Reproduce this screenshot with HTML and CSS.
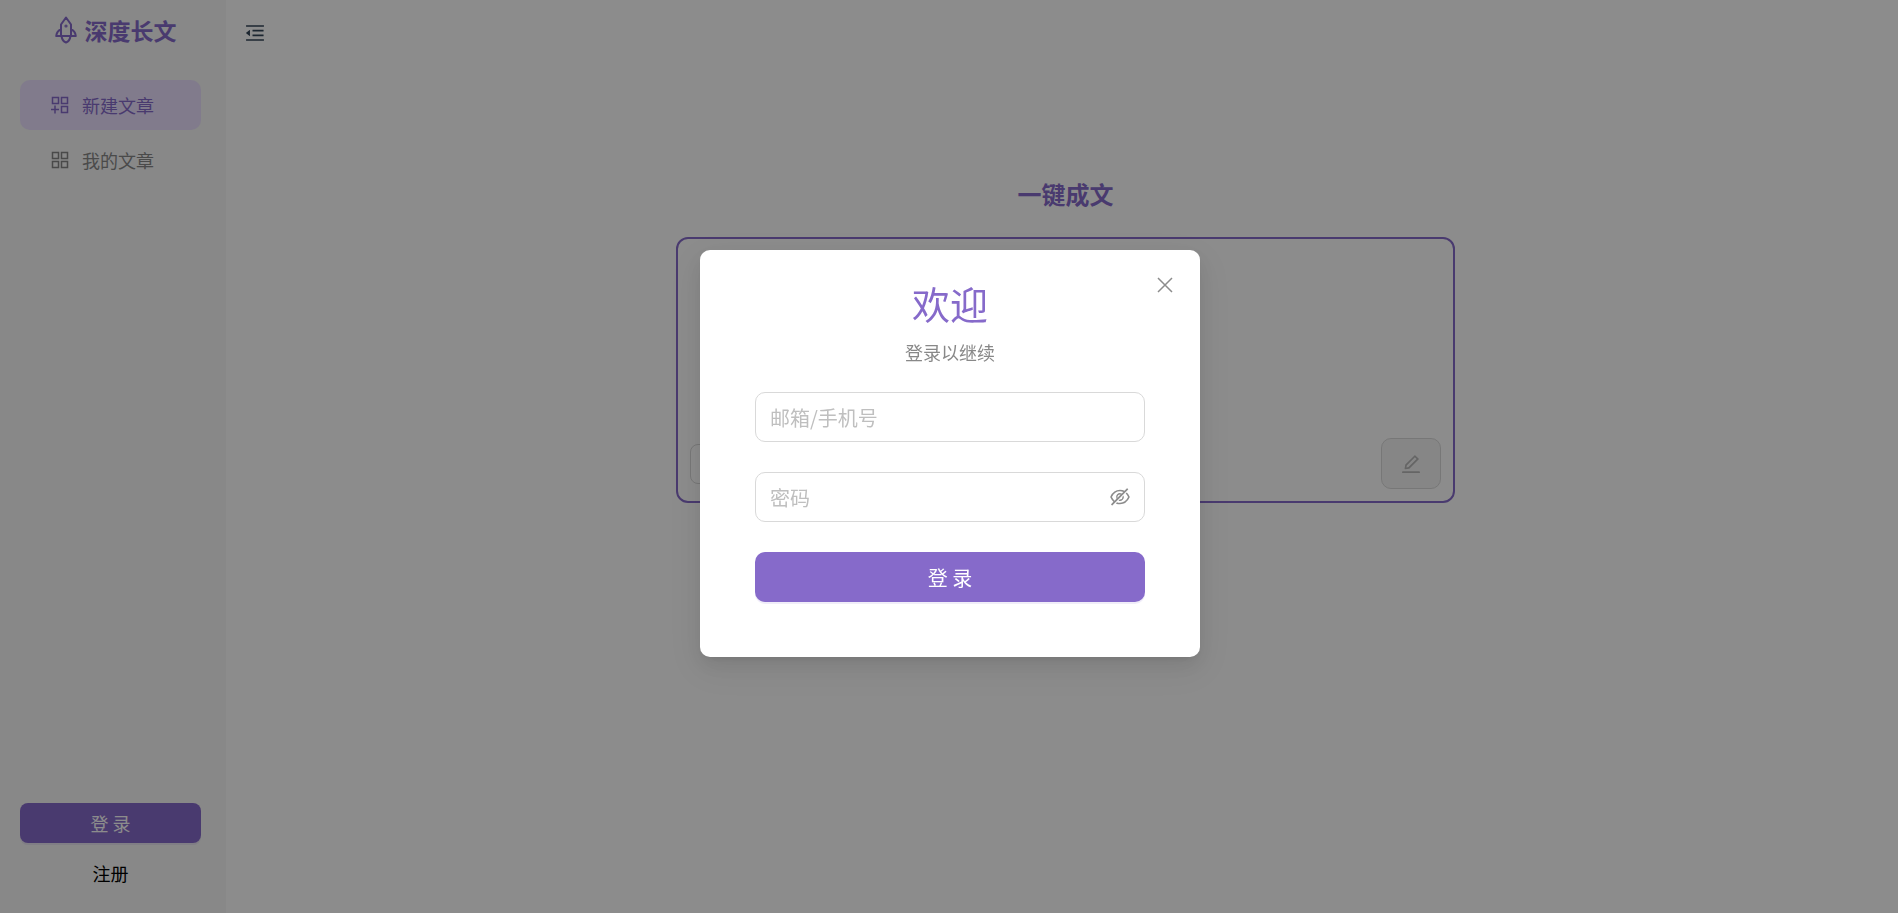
FILE: index.html
```
<!DOCTYPE html>
<html lang="zh-CN">
<head>
<meta charset="utf-8" />
<title>深度长文</title>
<link rel="stylesheet" href="styles.css">
</head>
<body>
	<div class="layout">
		<aside class="sider">
			<div class="logo">
				<svg class="logo-icon" viewBox="0 0 22 28" aria-hidden="true">
					<path d="M6 19.500V8.500L11 1.500l5 7v11M6 13.500c-3 1-4.500 3.500-4.800 6.500h19.600c-.3-3-1.800-5.500-4.800-6.500M6.500 20c.5 3.500 2 5.700 4.500 6.500 2.500-.8 4-3 4.500-6.500" />
					<circle cx="11" cy="10" r=".6" />
				</svg>
				<span>深度长文</span>
			</div>
			<nav class="menu">
				<a class="menu-item active" href="#">
					<svg class="menu-icon" viewBox="0 0 18 18" aria-hidden="true">
						<path d="M1.500 1.500h6v6h-6zM10.500 1.500h6v6h-6zM10.500 10.500h6v6h-6zM4 9.500v8M0 13.500h8" />
					</svg>
					<span>新建文章</span>
				</a>
				<a class="menu-item" href="#">
					<svg class="menu-icon" viewBox="0 0 18 18" aria-hidden="true">
						<path d="M1.500 1.500h6v6h-6zM10.500 1.500h6v6h-6zM10.500 10.500h6v6h-6zM1.500 10.500h6v6h-6z" />
					</svg>
					<span>我的文章</span>
				</a>
			</nav>
			<div class="sider-footer">
				<button type="button" class="btn btn-primary">登 录</button>
				<button type="button" class="btn btn-text">注册</button>
			</div>
		</aside>
		<main class="main">
			<header class="header">
				<button type="button" class="fold" aria-label="收起菜单">
					<svg viewBox="64 64 896 896" aria-hidden="true">
						<path d="M408 442h480c4.400 0 8-3.600 8-8v-56c0-4.400-3.600-8-8-8H408c-4.400 0-8 3.600-8 8v56c0 4.400 3.600 8 8 8zm-8 204c0 4.400 3.600 8 8 8h480c4.400 0 8-3.600 8-8v-56c0-4.400-3.600-8-8-8H408c-4.400 0-8 3.600-8 8v56zm504-486H120c-4.400 0-8 3.600-8 8v56c0 4.400 3.600 8 8 8h784c4.400 0 8-3.600 8-8v-56c0-4.400-3.600-8-8-8zm0 632H120c-4.400 0-8 3.600-8 8v56c0 4.400 3.600 8 8 8h784c4.400 0 8-3.600 8-8v-56c0-4.400-3.600-8-8-8zM115.400 518.900L271.700 642c5.800 4.600 14.400.5 14.400-6.900V388.900c0-7.400-8.500-11.500-14.400-6.900L115.400 505.100a8.740 8.740 0 000 13.800z" />
					</svg>
				</button>
			</header>
			<section class="content">
				<h1 class="content-title">一键成文</h1>
				<div class="editor">
					<textarea class="editor-text" aria-label="文章主题"></textarea>
					<div class="editor-tools">
						<select class="editor-select" aria-label="文章类型"></select>
						<button type="button" class="editor-submit" aria-label="生成" disabled>
							<svg viewBox="64 64 896 896" aria-hidden="true">
								<path d="M257.700 752c2 0 4-.2 6-.5L431.900 722c2-.4 3.900-1.300 5.300-2.800l423.900-423.900a9.960 9.960 0 000-14.100L694.900 114.900c-1.900-1.900-4.400-2.900-7.100-2.900s-5.200 1-7.100 2.900L256.800 538.800c-1.500 1.500-2.400 3.300-2.800 5.300l-29.500 168.200a33.500 33.500 0 009.400 29.800c6.600 6.400 14.900 9.900 23.800 9.900zm67.400-174.400L687.800 215l73.300 73.300-362.700 362.600-88.900 15.700 15.600-89zM880 836H144c-17.700 0-32 14.300-32 32v36c0 4.400 3.600 8 8 8h784c4.400 0 8-3.600 8-8v-36c0-17.700-14.300-32-32-32z" />
							</svg>
						</button>
					</div>
				</div>
			</section>
		</main>
	</div>

	<div class="mask">
		<div class="modal" role="dialog" aria-modal="true" aria-labelledby="modal-title">
			<button type="button" class="modal-close" aria-label="关闭">
				<svg viewBox="0 0 16 16" aria-hidden="true">
					<path d="M1 1l14 14M15 1L1 15" />
				</svg>
			</button>
			<h2 class="modal-title" id="modal-title">欢迎</h2>
			<p class="modal-desc">登录以继续</p>
			<form class="login-form">
				<div class="field">
					<input type="text" aria-label="邮箱/手机号" placeholder="邮箱/手机号">
				</div>
				<div class="field">
					<input type="password" aria-label="密码" placeholder="密码">
					<button type="button" class="eye" aria-label="显示密码">
						<svg viewBox="64 64 896 896" aria-hidden="true">
							<path d="M942.200 486.200Q889.470 375.110 816.700 305l-50.880 50.880C807.310 395.530 843.450 447.400 874.700 512 791.500 684.200 673.400 766 512 766q-72.670 0-133.870-22.380L323 798.750Q408 838 512 838q288.300 0 430.200-300.300a60.290 60.290 0 000-51.500zm-63.570-320.640L836 122.880a8 8 0 00-11.320 0L715.310 232.200Q624.860 186 512 186q-288.300 0-430.200 300.300a60.300 60.300 0 000 51.500q56.690 119.400 136.500 191.410L112.480 835a8 8 0 000 11.310L155.170 889a8 8 0 0011.310 0l712.150-712.120a8 8 0 000-11.320zM149.300 512C232.600 339.800 350.700 258 512 258c54.540 0 104.130 9.360 149.120 28.390l-70.300 70.300a176 176 0 00-238.130 238.130l-83.420 83.420C223.100 637.490 183.300 582.280 149.300 512zm246.700 0a112.110 112.110 0 01146.200-106.690L401.310 546.200A112 112 0 01396 512z" />
							<path d="M508 624c-3.460 0-6.870-.16-10.250-.47l-52.820 52.820a176.090 176.090 0 00227.420-227.420l-52.820 52.820c.31 3.380.47 6.790.47 10.250a111.940 111.940 0 01-112 112z" />
						</svg>
					</button>
				</div>
				<button type="submit" class="btn btn-primary btn-large">登 录</button>
			</form>
		</div>
	</div>
</body>
</html>
```
FILE: styles.css
```
* {
	box-sizing: border-box;
}

body {
	margin: 0;
	font-family: "Noto Sans CJK SC", sans-serif;
	font-size: 18px;
	font-weight: 400;
	color: #000;
	background: #fff;
}

button, input, textarea, select {
	font: inherit;
	color: inherit;
}

button {
	padding: 0;
	border: none;
	background: none;
	cursor: pointer;
}

a {
	text-decoration: none;
}

svg {
	display: block;
	fill: currentColor;
}

.layout {
	display: flex;
	min-height: 100vh;
}

/* 侧边栏 */
.sider {
	display: flex;
	flex-direction: column;
	flex: 0 0 226px;
	padding: 12px 25px 20px 20px;
	background: #f7f7f7;
}

.logo {
	display: flex;
	align-items: center;
	justify-content: center;
	gap: 8px;
	height: 36px;
	margin-bottom: 32px;
	padding-left: 10px;
	color: #866aca;
	font-size: 23px;
	font-weight: bold;
	line-height: 36px;
}

.logo-icon {
	width: 22px;
	height: 28px;
	fill: none;
	stroke: currentColor;
	stroke-width: 2;
	stroke-linejoin: round;
}

.menu {
	display: flex;
	flex-direction: column;
	gap: 5px;
}

.menu-item {
	display: flex;
	align-items: center;
	gap: 13px;
	height: 50px;
	padding-left: 31px;
	border-radius: 10px;
	color: #888;
	line-height: 24px;
}

.menu-item.active {
	color: #866aca;
	background: #ebe0ff;
}

.menu-icon {
	width: 18px;
	height: 18px;
	fill: none;
	stroke: currentColor;
	stroke-width: 1.5;
}

.sider-footer {
	display: flex;
	flex-direction: column;
	gap: 10px;
	margin-top: auto;
}

.btn {
	width: 100%;
	height: 40px;
	border-radius: 8px;
}

.btn-primary {
	color: #fff;
	background: #866aca;
	box-shadow: 0 2px 0 rgba(134, 106, 202, 0.12);
}

.btn-large {
	height: 50px;
	border-radius: 10px;
	font-size: 20px;
}

/* 主区域 */
.main {
	flex: 1;
	min-width: 0;
}

.header {
	display: flex;
	align-items: center;
	height: 66px;
	padding-left: 19px;
}

.fold svg {
	width: 20px;
	height: 20px;
	color: #344658;
}

.content {
	display: flex;
	flex-direction: column;
	align-items: center;
	padding: 108px 0 0 7px;
}

.content-title {
	margin: 0 0 23px;
	color: #866aca;
	font-size: 24px;
	font-weight: bold;
	line-height: 40px;
}

.editor {
	display: flex;
	flex-direction: column;
	width: 100%;
	max-width: 779px;
	min-height: 266px;
	padding: 12px;
	border: 2px solid #866aca;
	border-radius: 12px;
}

.editor-text {
	flex: 1;
	width: 100%;
	border: none;
	outline: none;
	resize: none;
	background: none;
}

.editor-tools {
	display: flex;
	align-items: center;
	justify-content: space-between;
}

.editor-select {
	width: 150px;
	height: 40px;
	border: 1px solid #d9d9d9;
	border-radius: 8px;
	background: #fff;
}

.editor-submit {
	display: flex;
	align-items: center;
	justify-content: center;
	width: 60px;
	height: 51px;
	border: 1px solid #d9d9d9;
	border-radius: 10px;
	color: #b8b8b8;
	background: #f5f5f5;
}

.editor-submit svg {
	width: 20px;
	height: 20px;
}

/* 登录弹窗 */
.mask {
	position: fixed;
	inset: 0;
	display: flex;
	align-items: center;
	justify-content: center;
	padding: 0 0 6px 2px;
	background: rgba(0, 0, 0, 0.45);
}

.modal {
	position: relative;
	width: 500px;
	padding: 25px 55px 55px;
	border-radius: 10px;
	background: #fff;
	box-shadow: 0 8px 20px rgba(0, 0, 0, 0.08), 0 4px 8px -5px rgba(0, 0, 0, 0.12), 0 11px 35px 10px rgba(0, 0, 0, 0.05);
}

.modal-close {
	position: absolute;
	top: 27px;
	right: 27px;
	color: #8c8c8c;
}

.modal-close svg {
	width: 16px;
	height: 16px;
	stroke: currentColor;
	stroke-width: 1.5;
}

.modal-title {
	margin: 0;
	color: #866aca;
	font-size: 38px;
	font-weight: 400;
	line-height: 56px;
	text-align: center;
}

.modal-desc {
	margin: 7px 0 26px;
	color: #888;
	line-height: 28px;
	text-align: center;
}

.login-form {
	display: flex;
	flex-direction: column;
	gap: 30px;
}

.field {
	display: flex;
	align-items: center;
	height: 50px;
	padding: 0 14px;
	border: 1px solid #d9d9d9;
	border-radius: 10px;
	font-size: 20px;
}

.field input {
	flex: 1;
	min-width: 0;
	padding: 0;
	border: none;
	outline: none;
	background: none;
}

.field input::placeholder {
	color: #bfbfbf;
}

.eye {
	color: #8c8c8c;
}

.eye svg {
	width: 20px;
	height: 20px;
}
```
